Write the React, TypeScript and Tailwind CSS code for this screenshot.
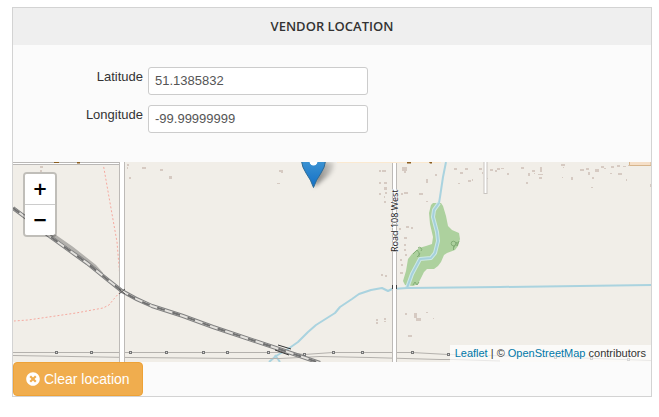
import { useState } from "react";
import { FaTimesCircle } from "react-icons/fa";

/* Small buildings: x, y, width, height */
const buildings: number[][] = [
  [40, 166, 3, 2], [40, 170, 2, 2], [127, 164, 2, 2], [127, 167, 1, 2], [142, 167, 4, 2], [160, 169, 3, 2], [129, 177, 2, 2], [169, 176, 3, 3],
  [279, 170, 4, 2], [281, 172, 2, 1], [277, 183, 3, 1], [379, 170, 2, 2], [382, 170, 4, 2], [379, 182, 2, 2], [384, 182, 3, 2], [384, 187, 3, 3], [379, 193, 2, 2], [385, 192, 2, 2], [384, 196, 1, 2], [384, 201, 2, 2],
  [402, 167, 5, 4], [404, 171, 2, 2], [435, 174, 2, 2], [426, 179, 2, 4], [404, 192, 4, 2], [401, 193, 2, 2], [419, 193, 4, 2], [426, 201, 2, 1],
  [399, 228, 2, 2], [406, 226, 3, 2], [411, 227, 2, 2], [404, 237, 3, 2], [404, 244, 2, 2], [404, 249, 2, 2], [405, 254, 2, 2], [400, 259, 2, 2], [401, 264, 2, 2], [400, 272, 3, 2], [381, 274, 2, 2], [385, 275, 2, 2],
  [376, 319, 2, 2], [376, 322, 2, 2], [384, 318, 2, 2], [384, 321, 2, 1], [405, 313, 2, 2], [414, 313, 3, 5], [416, 318, 5, 3], [426, 312, 2, 1], [433, 318, 1, 1], [408, 335, 4, 2],
  [454, 168, 3, 2], [460, 172, 3, 2], [465, 168, 3, 2], [479, 168, 3, 2], [482, 172, 1, 2], [458, 183, 2, 1], [468, 180, 3, 2], [472, 179, 1, 2], [487, 178, 1, 1],
  [490, 169, 3, 2], [495, 170, 2, 2], [497, 168, 3, 2], [501, 168, 3, 1], [507, 173, 2, 2], [521, 167, 3, 2], [528, 173, 2, 3], [526, 182, 2, 2], [532, 170, 3, 2], [534, 173, 1, 1], [538, 174, 5, 1], [540, 167, 2, 5], [539, 177, 3, 2],
  [561, 164, 4, 2], [563, 167, 1, 1], [562, 177, 1, 1], [571, 177, 2, 3], [580, 169, 4, 2], [586, 168, 3, 2], [588, 172, 2, 3], [592, 177, 2, 2], [595, 169, 4, 3], [601, 166, 3, 2], [604, 168, 2, 1], [611, 166, 3, 2], [617, 165, 3, 2], [623, 166, 3, 1], [628, 165, 2, 1], [618, 173, 4, 2], [610, 173, 2, 1], [626, 179, 1, 2], [591, 187, 2, 1], [650, 184, 1, 3],
];

/* Power line pylons: x, y */
const pylons: number[][] = [
  [56, 352], [91, 352], [130, 352], [166, 352], [203, 352], [227, 352], [268, 352], [304, 354],
  [333, 352], [362, 352], [412, 352], [448, 354], [555, 357], [591, 358], [628, 359],
];

const railway =
  "M13 208L25 217L48 235L66 248L87 263L108 280L122 291Q137 300 152 306L183 316L213 327L222 330L282 350L320 363";

function MapDrawing() {
  return (
    <svg
      className="block h-[200px] w-full bg-[#f1eee8]"
      viewBox="13 162 638 200"
      preserveAspectRatio="xMinYMin slice"
      role="img"
      aria-label="Map of the vendor location"
    >
      <defs>
        <linearGradient id="pin" x1="0" y1="0" x2="0" y2="1">
          <stop offset="0" stopColor="#3c93d2" />
          <stop offset="1" stopColor="#126fc6" />
        </linearGradient>
        <linearGradient id="shade" x1="0" y1="0" x2="1" y2="0">
          <stop offset="0" stopColor="#000" stopOpacity="0.5" />
          <stop offset="1" stopColor="#000" stopOpacity="0.1" />
        </linearGradient>
        <filter id="soft" x="-40%" y="-40%" width="180%" height="180%">
          <feGaussianBlur stdDeviation="2" />
        </filter>
      </defs>

      {buildings.map(([x, y, w, h]) => (
        <rect key={`${x}-${y}`} x={x} y={y} width={w} height={h} fill="#d6cac2" />
      ))}

      {/* wood */}
      <path
        d="M433 203H441L443 206L446 216L448 226L452 230L459 233L460 239L458 246L455 250L447 253L444 255L441 262L438 266L434 269H427L424 272L418 284L413 286L405 285L403 281L406 271L408 259L412 254L419 248L426 246L432 244L433 237L430 224L429 213L431 205Z"
        fill="#add19e"
      />
      <g fill="none" stroke="#83ad76" strokeWidth="1">
        <circle cx="453.500" cy="243.500" r="2.300" />
        <path d="M453.500 246V250M453.500 248L457 242V246L459 241M413 254L417 250L420 254L417 257M418 248a2 2 0 1 1 3 3M419 253V257M413 285L415 282L417 285L419 282" />
      </g>

      {/* streams */}
      <g fill="none" stroke="#aad3df" strokeWidth="2" strokeLinejoin="round">
        <path d="M446 162L443 177L440 197L439 203" />
        <path d="M439 203L434 210L433 217L437 232L438 241L435 253L431 258L420 259L412 274L407 288" stroke="#cde8e6" strokeWidth="4" />
        <path d="M439 203L434 210L433 217L437 232L438 241L435 253L431 258L420 259L412 274L407 288" stroke="#a5d0dc" />
        <path d="M269 362L276 356L288 349L298 342L308 332L316 325L335 313L340 307L352 299L359 294L371 290L382 288L388 291L392 289L407 288L500 287L651 285" />
        <path d="M275 355L280 362" />
      </g>

      {/* footpath */}
      <path
        d="M103 163L109 197L117 242L120 278M120 292L113 300L109 305L103 308L76 313L28 320L14 321"
        fill="none"
        stroke="#f6a99f"
        strokeWidth="1"
        strokeDasharray="2 2"
      />

      {/* power lines */}
      <g fill="none" stroke="#b4b1ad" strokeWidth="1">
        <path d="M13 352.500H290L304 354.500L333 352.500H412L448 354.500L555 357L651 360.500" />
        <path d="M13 355.500L130 357.500L240 358.500H280L320 356.500L370 357.500L440 359.500H453L500 361" />
      </g>

      {/* roads */}
      <path d="M13 163.500H121" stroke="#bab8b6" strokeWidth="3" />
      <path d="M13 163.500H121" stroke="#fff" strokeWidth="1" />
      <path d="M122 162V362" stroke="#bdbab7" strokeWidth="6" />
      <path d="M122 162V362" stroke="#fff" strokeWidth="4" />
      <path d="M394.500 162V362" stroke="#bdbab7" strokeWidth="5" />
      <path d="M394.500 162V362" stroke="#fff" strokeWidth="3" />
      <path d="M485.500 162V194" stroke="#c8c4c0" strokeWidth="4" />
      <path d="M485.500 162V193" stroke="#fff" strokeWidth="2" />
      <path d="M392.500 285V289M396.500 285V289" stroke="#444" strokeWidth="1" />
      <path d="M629.500 162V165.500H651V162" fill="#f5dfc8" stroke="#d7b58c" strokeWidth="1" />

      {/* railway */}
      <g fill="none">
        <path d="M52 234L72 248L95 266L102 274" stroke="#b3b1ad" strokeWidth="3" />
        <path d={railway} stroke="#808080" strokeWidth="4" />
        <path d={railway} stroke="#e4e2de" strokeWidth="2" />
        <path d={railway} stroke="#707070" strokeWidth="2" strokeDasharray="8 8" />
        <path d="M119 289L125 294M125 289L119 294" stroke="#555" strokeWidth="1" />
        <path d="M278 345L291 349M275 350L289 355" stroke="#333" strokeWidth="1" />
      </g>

      {pylons.map(([x, y]) => (
        <rect key={x} x={x - 0.5} y={y - 0.5} width="2" height="2" fill="#ddd" stroke="#777" strokeWidth="1" />
      ))}

      {/* street labels cut by the top edge */}
      <path d="M337 162.500H441" stroke="#fbe9d0" strokeWidth="1" />
      <path d="M54 162H59V163H54ZM77 162H80V163.500H77ZM407 162H411V163.500H407ZM429 162H432V163.500H430Z" fill="#8a5c1e" />

      <text
        transform="translate(398 252) rotate(-90)"
        className="font-['Noto_Sans',sans-serif] text-[9px]"
        fill="#222"
        stroke="#fff"
        strokeWidth="1"
        paintOrder="stroke"
      >
        Road 108 West
      </text>

      {/* marker */}
      <path d="M314 187L317 162H334Q335 170 328 176Z" fill="url(#shade)" filter="url(#soft)" />
      <path d="M301.500 161Q302 167 306 173Q311 180 313.500 187.500Q316 180 321 173Q325 167 325.500 161Z" fill="url(#pin)" stroke="#2e6c97" strokeWidth="1" />
      <ellipse cx="313.500" cy="161" rx="4" ry="4.500" fill="#fff" />
    </svg>
  );
}

const field =
  "h-7 w-[220px] rounded-[3px] border border-[#cccccc] bg-white px-1.5 pb-0.5 text-[13px] text-[#555555] outline-none";
const row = "flex items-start gap-[5px]";
const label = "w-[130px] text-right leading-5";
const zoomButton =
  "block h-[30px] w-[30px] bg-white text-center font-['DejaVu_Sans',sans-serif] text-lg leading-[30px] font-bold text-black";

export default function App() {
  const [latitude, setLatitude] = useState("51.1385832");
  const [longitude, setLongitude] = useState("-99.99999999");

  return (
    <main className="bg-white pt-[7px] pr-[7px] pb-5 pl-3 font-['Liberation_Sans',Arial,sans-serif] text-[13px] text-[#333333]">
      <section className="border border-[#d3d3d3] bg-[#fbfbfb]">
        <h2 className="bg-[#efefef] text-center font-['Open_Sans',sans-serif] text-[13px] leading-[37px] font-semibold">
          VENDOR LOCATION
        </h2>
        <div className="flex flex-col gap-2.5 pt-[22px] pb-[29px]">
          <div className={row}>
            <label className={label} htmlFor="latitude">Latitude</label>
            <input id="latitude" className={field} value={latitude} onChange={(e) => setLatitude(e.target.value)} />
          </div>
          <div className={row}>
            <label className={label} htmlFor="longitude">Longitude</label>
            <input id="longitude" className={field} value={longitude} onChange={(e) => setLongitude(e.target.value)} />
          </div>
        </div>

        <div className="relative overflow-hidden">
          <MapDrawing />
          <div className="absolute top-2.5 left-2.5 rounded border-2 border-black/20 bg-clip-padding">
            <button type="button" aria-label="Zoom in" className={`${zoomButton} box-content rounded-t-[2px] border-b border-[#cccccc]`}>+</button>
            <button type="button" aria-label="Zoom out" className={`${zoomButton} rounded-b-[2px]`}>−</button>
          </div>
          <div className="absolute right-0 bottom-0 bg-white/70 px-[5px] text-[11px] leading-[17px]">
            <a href="#leaflet" className="text-[#0078a8]">Leaflet</a> | © <a href="#osm" className="text-[#0078a8]">OpenStreetMap</a> contributors
          </div>
        </div>

        <button
          type="button"
          onClick={() => {
            setLatitude("");
            setLongitude("");
          }}
          className="flex h-[34px] items-center gap-1 rounded border border-[#eea236] bg-[#f0ad4e] px-3 text-sm text-white"
        >
          <FaTimesCircle className="size-3.5" />
          Clear location
        </button>
      </section>
    </main>
  );
}
